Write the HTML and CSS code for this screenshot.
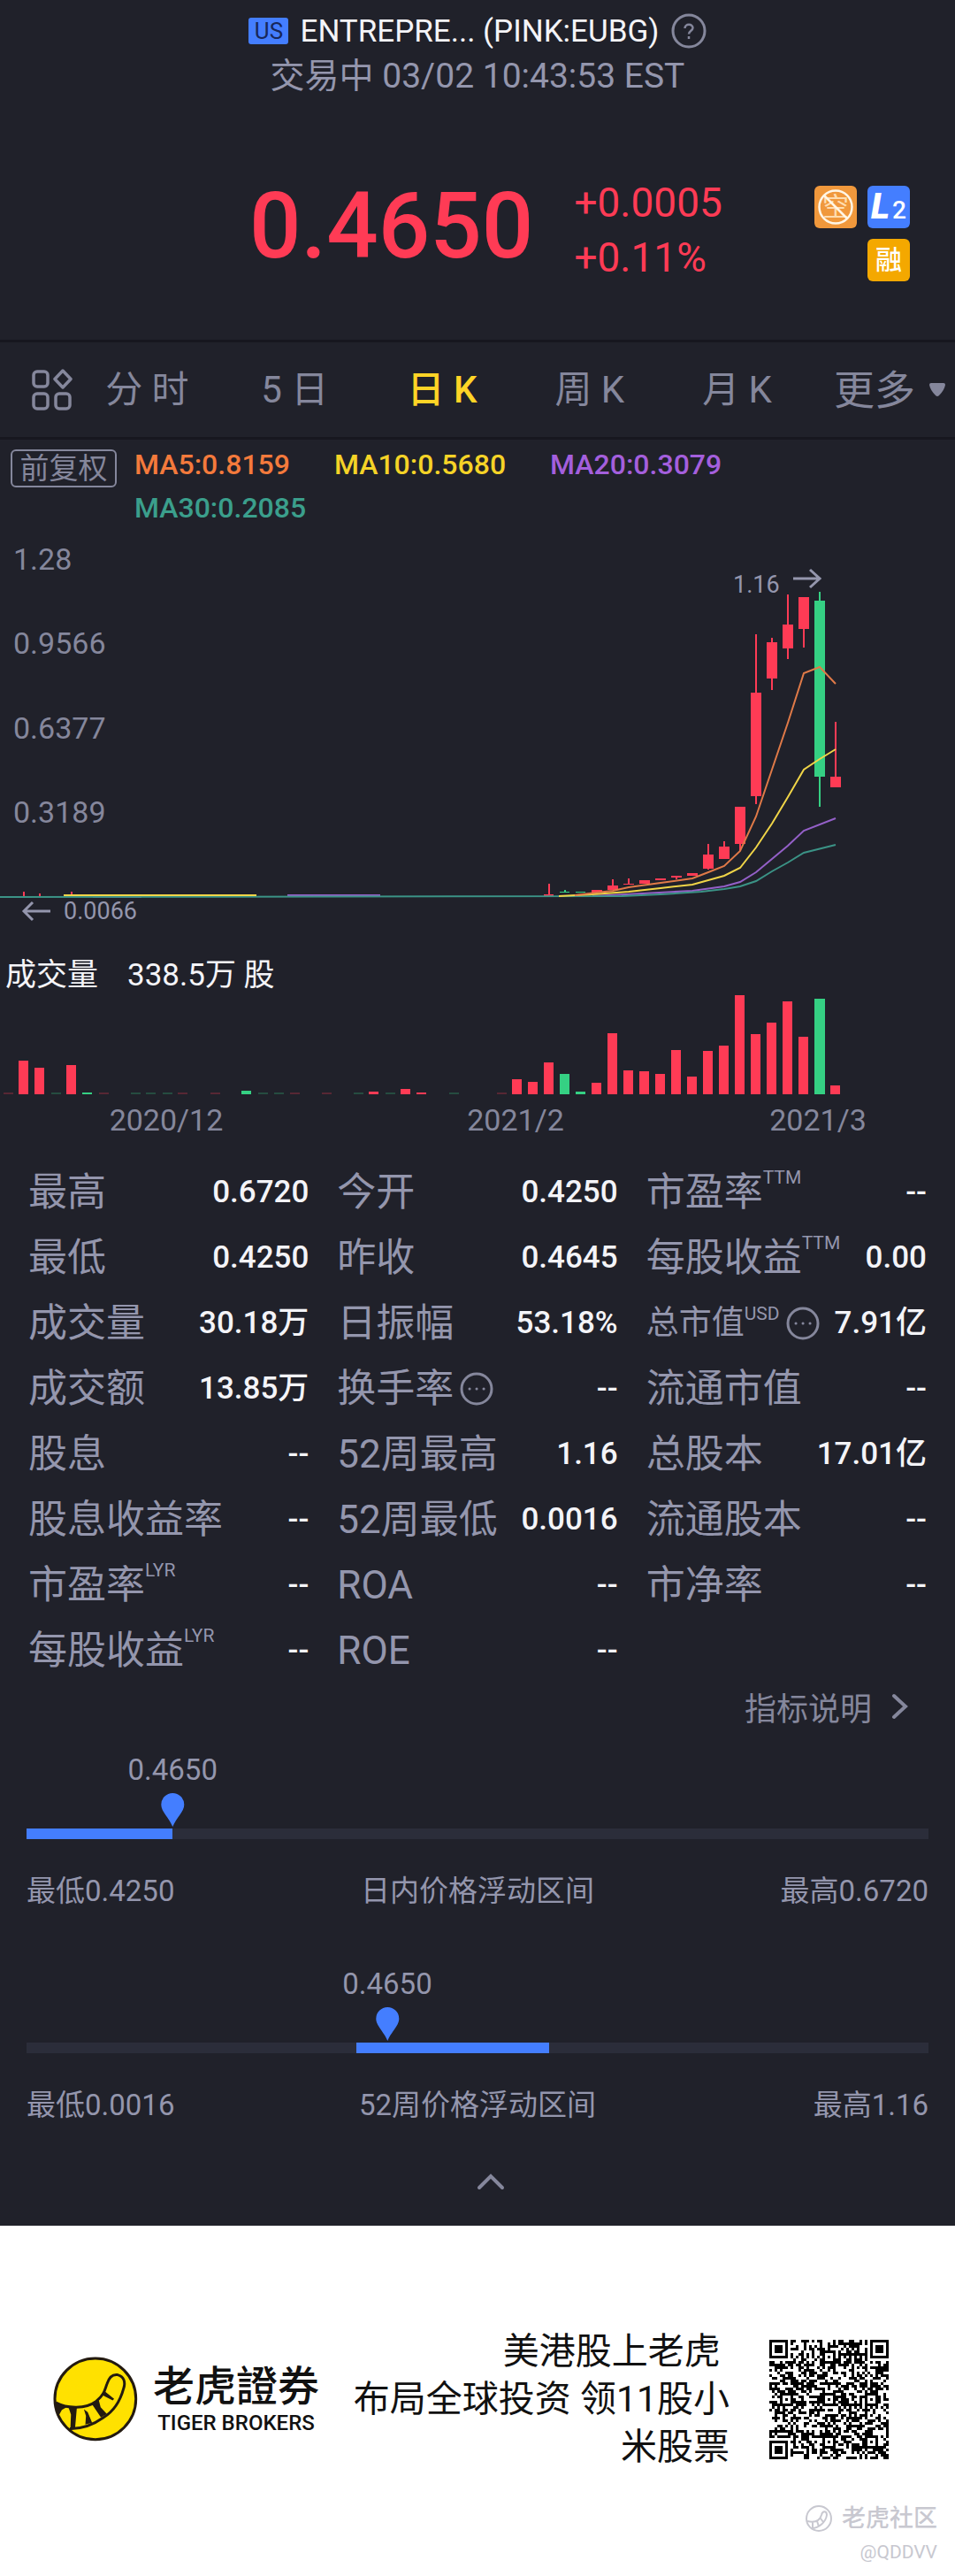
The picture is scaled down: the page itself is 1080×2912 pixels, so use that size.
FILE: index.html
```html
<!DOCTYPE html>
<html lang="zh-CN">
<head>
<meta charset="utf-8">
<meta name="viewport" content="width=device-width, initial-scale=1">
<title>EUBG 行情</title>
<link rel="stylesheet" href="styles.css">
</head>
<body>
<main class="quote-page">
  <header class="header">
    <h1 class="title">
      <span class="market">US</span>
      <span>ENTREPRE... (PINK:EUBG)</span>
      <button class="icon-button" aria-label="帮助">
        <svg width="40" height="40" viewBox="0 0 40 40" fill="none" stroke="#85879c" stroke-width="3"><circle cx="20" cy="20" r="18"/><path d="M15.500 17 C15.500 11.500 24.500 11.500 24.500 16.500 C24.500 19.500 20 20 20 23.500" stroke-width="2.500"/><path d="M20 26v3" stroke-width="2.500"/></svg>
      </button>
    </h1>
    <p class="status">交易中 03/02 10:43:53 EST</p>
  </header>

  <section class="price">
    <div class="price-main">
      <strong class="last">0.4650</strong>
      <div class="change"><span>+0.0005</span><span>+0.11%</span></div>
    </div>
    <div class="badges">
      <span class="badge badge-short">空
        <svg class="badge-ban" width="48" height="48" viewBox="0 0 48 48" fill="none" stroke="#fff6e6" stroke-width="2.500"><circle cx="24" cy="24" r="18.500"/><path d="M11 11 37 37"/></svg>
      </span>
      <span class="badge badge-level"><b>L</b><span>2</span></span>
      <span class="badge badge-margin">融</span>
    </div>
  </section>

  <nav class="tabs">
    <button class="icon-button" aria-label="布局">
      <svg width="48" height="48" viewBox="0 0 48 48" fill="none" stroke="#85879c" stroke-width="3.500"><rect x="3" y="3" width="16" height="17" rx="4"/><rect x="3" y="28" width="16" height="17" rx="4"/><rect x="28" y="28" width="16" height="17" rx="4"/><path d="M36 2 45 11.500 36 21 27 11.500Z" stroke-linejoin="round"/></svg>
    </button>
    <button class="tab">分 时</button>
    <button class="tab">5 日</button>
    <button class="tab tab-active">日 K</button>
    <button class="tab">周 K</button>
    <button class="tab">月 K</button>
    <button class="more">更多
      <svg width="20" height="16" viewBox="0 0 20 16"><path d="M1 2Q1 0 3 0H17Q19 0 19 2Q18 8 12 14Q10 16 8 14Q2 8 1 2Z" fill="#85879c"/></svg>
    </button>
  </nav>

  <section class="averages">
    <button class="adjust">前复权</button>
    <ul class="ma-list">
      <li class="ma5">MA5:0.8159</li>
      <li class="ma10">MA10:0.5680</li>
      <li class="ma20">MA20:0.3079</li>
      <li class="ma30">MA30:0.2085</li>
    </ul>
  </section>

  <svg class="chart" viewBox="0 0 1080 460" role="img" aria-label="日K线">
    <g class="axis-text">
      <text x="15" y="45">1.28</text><text x="15" y="140">0.9566</text><text x="15" y="236">0.6377</text><text x="15" y="331">0.3189</text>
    </g>
    <g class="up">
      <path d="M27 409v7M45 411v4M81 409v5M621 400v14M693 395v12M711 394v7M729 396v4M765 391v4M801 355v29M819 352v20M837 313v50M855 118v192M873 122v59M891 73v73M909 76v57M945 217v74"/>
      <path class="body" d="M21 414h11v2h-11zM39 414h11v1h-11zM75 412h11v3h-11zM105 412h19v2h-19zM615 412h11v2h-11zM669 407h12v3h-12zM687 402h12v5h-12zM705 400h12v1h-12zM723 396h12v4h-12zM741 394h12v2h-12zM759 391h12v2h-12zM777 388h12v3h-12zM795 367h12v16h-12zM813 358h12v14h-12zM831 313h12v42h-12zM849 184h12v117h-12zM867 127h12v41h-12zM885 107h12v27h-12zM903 76h12v36h-12zM939 279h12v12h-12z"/>
    </g>
    <g class="down">
      <path d="M639 407v3M927 70v243"/>
      <path class="body" d="M633 409h11v1h-11zM651 409h11v1h-11zM921 80h12v199h-12z"/>
    </g>
    <g class="lines">
      <path class="s20" d="M325 413H430M105 415H160M670 414 727 411 783 408 819 403 837 398 855 387 873 372 891 357 909 340 945 326"/>
      <path class="s30" d="M0 415 703 414 747 412 793 409 819 406 837 403 855 397 873 386 891 376 909 365 945 356"/>
      <path class="s10" d="M72 413H290M632 414 670 412 711 409 747 405 783 401 819 391 837 382 855 359 873 332 891 302 909 271 927 259 945 248"/>
      <path class="s5" d="M650 413 675 410 693 408 711 404 747 399 783 394 801 387 819 380 837 363 855 324 873 271 891 218 909 162 927 155 945 174"/>
    </g>
    <g class="marks">
      <text x="829" y="71">1.16</text><text x="72" y="440">0.0066</text>
      <path d="M897 55h30M916 45l11 10-11 10M57 431H27M37 421l-10 10 10 10"/>
    </g>
  </svg>

  <p class="volume-title"><span>成交量</span><span>338.5万 股</span></p>
  <svg class="chart" viewBox="0 0 1080 168" role="img" aria-label="成交量">
    <g class="up">
      <path class="body" d="M21 112v-38h11v38zM39 112v-30h11v30zM75 112v-33h11v33zM417 112v-3h11v3zM453 112v-6h11v6zM471 112v-2h11v2zM579 112v-17h11v17zM597 112v-14h11v14zM615 112v-36h11v36zM669 112v-13h11v13zM687 112v-69h11v69zM705 112v-27h11v27zM723 112v-26h11v26zM741 112v-23h11v23zM759 112v-50h11v50zM777 112v-20h11v20zM795 112v-49h11v49zM813 112v-55h11v55zM831 112v-112h11v112zM849 112v-68h11v68zM867 112v-81h11v81zM885 112v-105h11v105zM903 112v-65h11v65zM939 112v-10h11v10z"/>
      <path class="faint" d="M4 111h11M112 111h11M201 111h11M238 111h11M328 111h11M364 111h11M562 111h11"/>
    </g>
    <g class="down">
      <path class="body" d="M93 112v-2h11v2zM273 112v-4h11v4zM633 112v-23h11v23zM651 112v-3h11v3zM921 112v-108h12v108z"/>
      <path class="faint" d="M58 111h11M148 111h11M165 111h11M184 111h11M292 111h11M310 111h11M400 111h11M436 111h11M508 111h11"/>
    </g>
    <g class="axis-text dates"><text x="188" y="153">2020/12</text><text x="583" y="153">2021/2</text><text x="925" y="153">2021/3</text></g>
  </svg>

  <dl class="stats">
    <div><dt>最高</dt><dd>0.6720</dd></div>
    <div><dt>今开</dt><dd>0.4250</dd></div>
    <div><dt>市盈率<sup>TTM</sup></dt><dd>--</dd></div>
    <div><dt>最低</dt><dd>0.4250</dd></div>
    <div><dt>昨收</dt><dd>0.4645</dd></div>
    <div><dt>每股收益<sup>TTM</sup></dt><dd>0.00</dd></div>
    <div><dt>成交量</dt><dd>30.18万</dd></div>
    <div><dt>日振幅</dt><dd>53.18%</dd></div>
    <div><dt class="compact">总市值<sup>USD</sup><svg class="dots" width="40" height="40" viewBox="0 0 40 40"><circle cx="20" cy="20" r="17"/><path d="M12 20h.1M20 20h.1M28 20h.1"/></svg></dt><dd>7.91亿</dd></div>
    <div><dt>成交额</dt><dd>13.85万</dd></div>
    <div><dt>换手率<svg class="dots" width="40" height="40" viewBox="0 0 40 40"><circle cx="20" cy="20" r="17"/><path d="M12 20h.1M20 20h.1M28 20h.1"/></svg></dt><dd>--</dd></div>
    <div><dt>流通市值</dt><dd>--</dd></div>
    <div><dt>股息</dt><dd>--</dd></div>
    <div><dt>52周最高</dt><dd>1.16</dd></div>
    <div><dt>总股本</dt><dd>17.01亿</dd></div>
    <div><dt>股息收益率</dt><dd>--</dd></div>
    <div><dt>52周最低</dt><dd>0.0016</dd></div>
    <div><dt>流通股本</dt><dd>--</dd></div>
    <div><dt>市盈率<sup>LYR</sup></dt><dd>--</dd></div>
    <div><dt>ROA</dt><dd>--</dd></div>
    <div><dt>市净率</dt><dd>--</dd></div>
    <div><dt>每股收益<sup>LYR</sup></dt><dd>--</dd></div>
    <div><dt>ROE</dt><dd>--</dd></div>
  </dl>

  <a class="explain" href="#">指标说明
    <svg width="20" height="32" viewBox="0 0 20 32" fill="none" stroke="#85879c" stroke-width="4" stroke-linecap="round"><path d="M3 4 16 16 3 28"/></svg>
  </a>

  <section class="range">
    <div class="range-top">
      <div class="pointer" style="left:16.2%">0.4650
        <svg width="28" height="38" viewBox="0 0 28 38"><path d="M14 38C10 28 1 21 1 13A13 13 0 0 1 27 13C27 21 18 28 14 38Z" fill="#447eff"/></svg>
      </div>
    </div>
    <div class="track"><div class="fill" style="width:16.2%"></div></div>
    <div class="range-labels"><span>最低0.4250</span><span>日内价格浮动区间</span><span>最高0.6720</span></div>
  </section>
  <section class="range">
    <div class="range-top">
      <div class="pointer" style="left:40%">0.4650
        <svg width="28" height="38" viewBox="0 0 28 38"><path d="M14 38C10 28 1 21 1 13A13 13 0 0 1 27 13C27 21 18 28 14 38Z" fill="#447eff"/></svg>
      </div>
    </div>
    <div class="track"><div class="fill" style="margin-left:36.6%;width:21.3%"></div></div>
    <div class="range-labels"><span>最低0.0016</span><span>52周价格浮动区间</span><span>最高1.16</span></div>
  </section>

  <button class="collapse" aria-label="收起">
    <svg width="32" height="24" viewBox="0 0 32 24" fill="none" stroke="#85879c" stroke-width="4" stroke-linecap="round"><path d="M3 19 16 6 29 19"/></svg>
  </button>
</main>

<footer class="footer">
  <div class="promo">
    <div class="brand">
      <svg width="98" height="98" viewBox="25 40 295 295">
        <circle cx="172" cy="187" r="138" fill="#ffe100" stroke="#231a10" stroke-width="9"/>
        <path d="M38 200C75 220 140 222 175 195C203 172 203 158 212 135C220 110 235 103 248 105C268 110 276 128 268 152C255 200 228 233 200 250C165 275 122 289 85 288" fill="none" stroke="#231a10" stroke-width="9"/>
        <path d="M36 198 78 213 58 224 44 250ZM80 214 109 217 103 286 87 288 89 240ZM133 222 146 232 161 268 138 274 140 245ZM160 204 184 192 190 215 211 238 191 250ZM192 170 205 162 236 187 231 192 203 178Z" fill="#231a10"/>
      </svg>
      <div class="brand-name"><strong>老虎證券</strong><span>TIGER BROKERS</span></div>
    </div>
    <p class="slogan">美港股上老虎&nbsp;<br>布局全球投资 领11股小<br>米股票</p>
    <svg class="qr" width="135" height="135" viewBox="0 0 45 45" role="img" aria-label="二维码" shape-rendering="crispEdges"><path id="qr-modules"/></svg>
  </div>
  <div class="watermark">
    <p class="community">
      <svg width="32" height="32" viewBox="0 0 32 32" fill="none" stroke="#c8c8d0" stroke-width="2"><circle cx="16" cy="16" r="14"/><path d="M3 19C12 21 17 19 19 12C20 7 25 7 25 12C24 20 16 27 8 27M9 20v7M14 19l2 6M18 16l3 4"/></svg>
      老虎社区
    </p>
    <p class="user">@QDDVV</p>
  </div>
</footer>
<script src="qr.js"></script>
</body>
</html>
```

FILE: styles.css
```css
* { box-sizing: border-box; }
body {
  margin: 0;
  background: #fff;
  color: #f4f4f8;
  font-family: Roboto, "Noto Sans CJK SC", sans-serif;
}
h1, p, dl, dd, ul { margin: 0; padding: 0; }
ul { list-style: none; }
svg { display: block; flex: none; }
button { padding: 0; border: 0; background: none; color: inherit; font: inherit; }

.quote-page { background: #20212a; color: #85879c; }

.header { padding-top: 15px; text-align: center; }
.title {
  display: flex;
  justify-content: center;
  align-items: center;
  gap: 13px;
  height: 40px;
  color: #f4f4f8;
  font-size: 35px;
  font-weight: 400;
}
.market {
  width: 45px;
  border-radius: 3px;
  background: #447eff;
  color: #17275a;
  font-size: 26px;
  line-height: 30px;
}
.status { margin-top: 7px; color: #9496ad; font-size: 39px; line-height: 48px; }

.price {
  display: grid;
  grid-template-columns: 1fr auto 1fr;
  align-items: center;
  padding: 88px 51px 62px 70px;
  border-bottom: 3px solid #17171f;
}
.price-main {
  grid-column: 2;
  display: flex;
  align-items: center;
  gap: 46px;
  color: #ff3b55;
}
.last { padding-bottom: 8px; font-size: 103px; font-weight: 500; line-height: 104px; }
.change { display: grid; font-size: 46px; line-height: 62px; }
.badges {
  display: grid;
  grid-template-columns: 48px 48px;
  gap: 12px;
  justify-content: end;
  padding-top: 8px;
}
.badge {
  position: relative;
  display: flex;
  justify-content: center;
  align-items: center;
  height: 48px;
  border-radius: 6px;
  color: #fff;
  font-size: 30px;
  line-height: 48px;
}
.badge-short { background: #f0983c; color: #ffdcae; }
.badge-ban { position: absolute; inset: 0; }
.badge-level { gap: 3px; align-items: baseline; background: #447eff; font-size: 28px; font-weight: 500; }
.badge-level b { font-size: 40px; font-style: italic; font-weight: 900; }
.badge-margin { grid-column: 2; background: #f4a800; font-weight: 500; }

.tabs {
  display: flex;
  align-items: center;
  height: 110px;
  padding: 0 10px 0 35px;
  border-bottom: 3px solid #17171f;
  font-size: 42px;
  line-height: 60px;
}
.tab { flex: 1; }
.tab-active { color: #ffd426; font-weight: 500; }
.more { display: flex; align-items: center; gap: 15px; margin-left: 26px; font-size: 46px; }

.averages {
  display: flex;
  align-items: flex-start;
  gap: 20px;
  padding: 4px 32px 0 12px;
  font-size: 32px;
  line-height: 49px;
}
.adjust {
  width: 120px;
  height: 43px;
  margin-top: 7px;
  border: 2px solid #85879c;
  border-radius: 6px;
  font-size: 33px;
  line-height: 39px;
}
.ma-list { display: flex; flex: 1; flex-wrap: wrap; column-gap: 50px; font-weight: 500; }
.ma5 { color: #f47a3c; }
.ma10 { color: #f5d327; }
.ma20 { color: #a45fdd; }
.ma30 { color: #3b9f8c; }

.chart { width: 100%; height: auto; }
.axis-text { fill: #85879c; font-size: 34px; }
.dates { text-anchor: middle; }
.up { fill: #ff3b55; stroke: #ff3b55; stroke-width: 2; }
.down { fill: #35d083; stroke: #35d083; stroke-width: 2; }
.body { stroke: none; }
.faint { stroke-width: 1; opacity: .5; }
.lines { fill: none; stroke-width: 2; }
.s5 { stroke: #e07a48; }
.s10 { stroke: #f0d548; }
.s20 { stroke: #9460c8; }
.s30 { stroke: #3b9386; }
.marks { fill: #9496ad; font-size: 27px; }
.marks path { fill: none; stroke: #9496ad; stroke-width: 3; }

.volume-title {
  display: flex;
  gap: 33px;
  padding: 22px 6px 0;
  color: #f4f4f8;
  font-size: 35px;
  line-height: 44px;
}

.stats {
  display: grid;
  grid-template-columns: repeat(3, 1fr);
  column-gap: 32px;
  padding: 18px 32px 0;
}
.stats div { display: flex; justify-content: space-between; align-items: center; height: 74px; white-space: nowrap; }
.stats dt { display: flex; align-items: center; color: #9496ad; font-size: 44px; line-height: 60px; }
.stats .compact { font-size: 37px; }
.stats sup { align-self: flex-start; font-size: 21px; line-height: 26px; }
.stats .compact sup { padding-top: 6px; }
.stats dd { color: #f4f4f8; font-size: 35px; font-weight: 500; line-height: 60px; }
.dots { margin-left: 6px; fill: none; stroke: #85879c; stroke-width: 3; stroke-linecap: round; }

.explain {
  display: flex;
  justify-content: flex-end;
  align-items: center;
  gap: 22px;
  height: 52px;
  padding-right: 52px;
  color: #85879c;
  font-size: 36px;
  text-decoration: none;
}

.range { padding: 26px 30px 39px; font-size: 33px; line-height: 40px; color: #9496ad; }
.range-top { position: relative; height: 86px; }
.pointer {
  position: absolute;
  top: 0;
  display: grid;
  justify-items: center;
  gap: 6px;
  transform: translateX(-50%);
}
.track { height: 12px; background: #2b2d3a; }
.fill { height: 12px; background: #447eff; }
.range-labels { display: grid; grid-template-columns: 1fr auto 1fr; padding-top: 39px; }
.range-labels :last-child { text-align: right; }

.collapse { display: flex; justify-content: center; width: 100%; padding: 15px 0 38px 30px; }

.footer { padding: 115px 0 12px; color: #111; }
.promo { display: flex; align-items: center; padding: 0 75px 0 59px; }
.brand { display: flex; align-items: center; gap: 16px; }
.brand-name { display: grid; justify-items: center; font-family: Roboto, "Noto Sans CJK TC", sans-serif; }
.brand-name strong { font-size: 47px; font-weight: 500; line-height: 54px; }
.brand-name span { font-size: 24px; font-weight: 500; line-height: 28px; }
.slogan { flex: 1; margin-right: 45px; font-size: 41px; line-height: 54px; text-align: right; }
.watermark { padding: 38px 20px 0; color: #c8c8d0; text-align: right; }
.community { display: flex; justify-content: flex-end; align-items: center; gap: 10px; font-size: 27px; font-weight: 500; line-height: 32px; }
.user { margin-top: 10px; font-size: 21px; line-height: 24px; }
```

FILE: qr.js
```js
// Draws a 45-module QR symbol: finder, alignment and timing patterns over a seeded data field.
const SIZE = 45;
const grid = [];
let seed = 20210302;
const random = () => {
  seed = (seed * 1103515245 + 12345) % 2147483648;
  return seed / 2147483648;
};
for (let y = 0; y < SIZE; y++) {
  grid.push([]);
  for (let x = 0; x < SIZE; x++) grid[y].push(random() < 0.5);
}
for (let i = 8; i < SIZE - 8; i++) {
  grid[6][i] = grid[i][6] = i % 2 === 0;
}
const square = (cx, cy, radius, isDark) => {
  for (let dy = -radius; dy <= radius; dy++) {
    for (let dx = -radius; dx <= radius; dx++) {
      const x = cx + dx, y = cy + dy;
      if (x < 0 || y < 0 || x >= SIZE || y >= SIZE) continue;
      grid[y][x] = isDark(Math.max(Math.abs(dx), Math.abs(dy)));
    }
  }
};
for (const [x, y] of [[22, 6], [6, 22], [22, 22], [38, 22], [22, 38], [38, 38]]) {
  square(x, y, 2, (d) => d !== 1);
}
for (const [x, y] of [[3, 3], [41, 3], [3, 41]]) {
  square(x, y, 4, (d) => d !== 2 && d !== 4);
}
let path = "";
grid.forEach((row, y) => row.forEach((dark, x) => {
  if (dark) path += `M${x} ${y}h1v1h-1z`;
}));
document.getElementById("qr-modules").setAttribute("d", path);
```
